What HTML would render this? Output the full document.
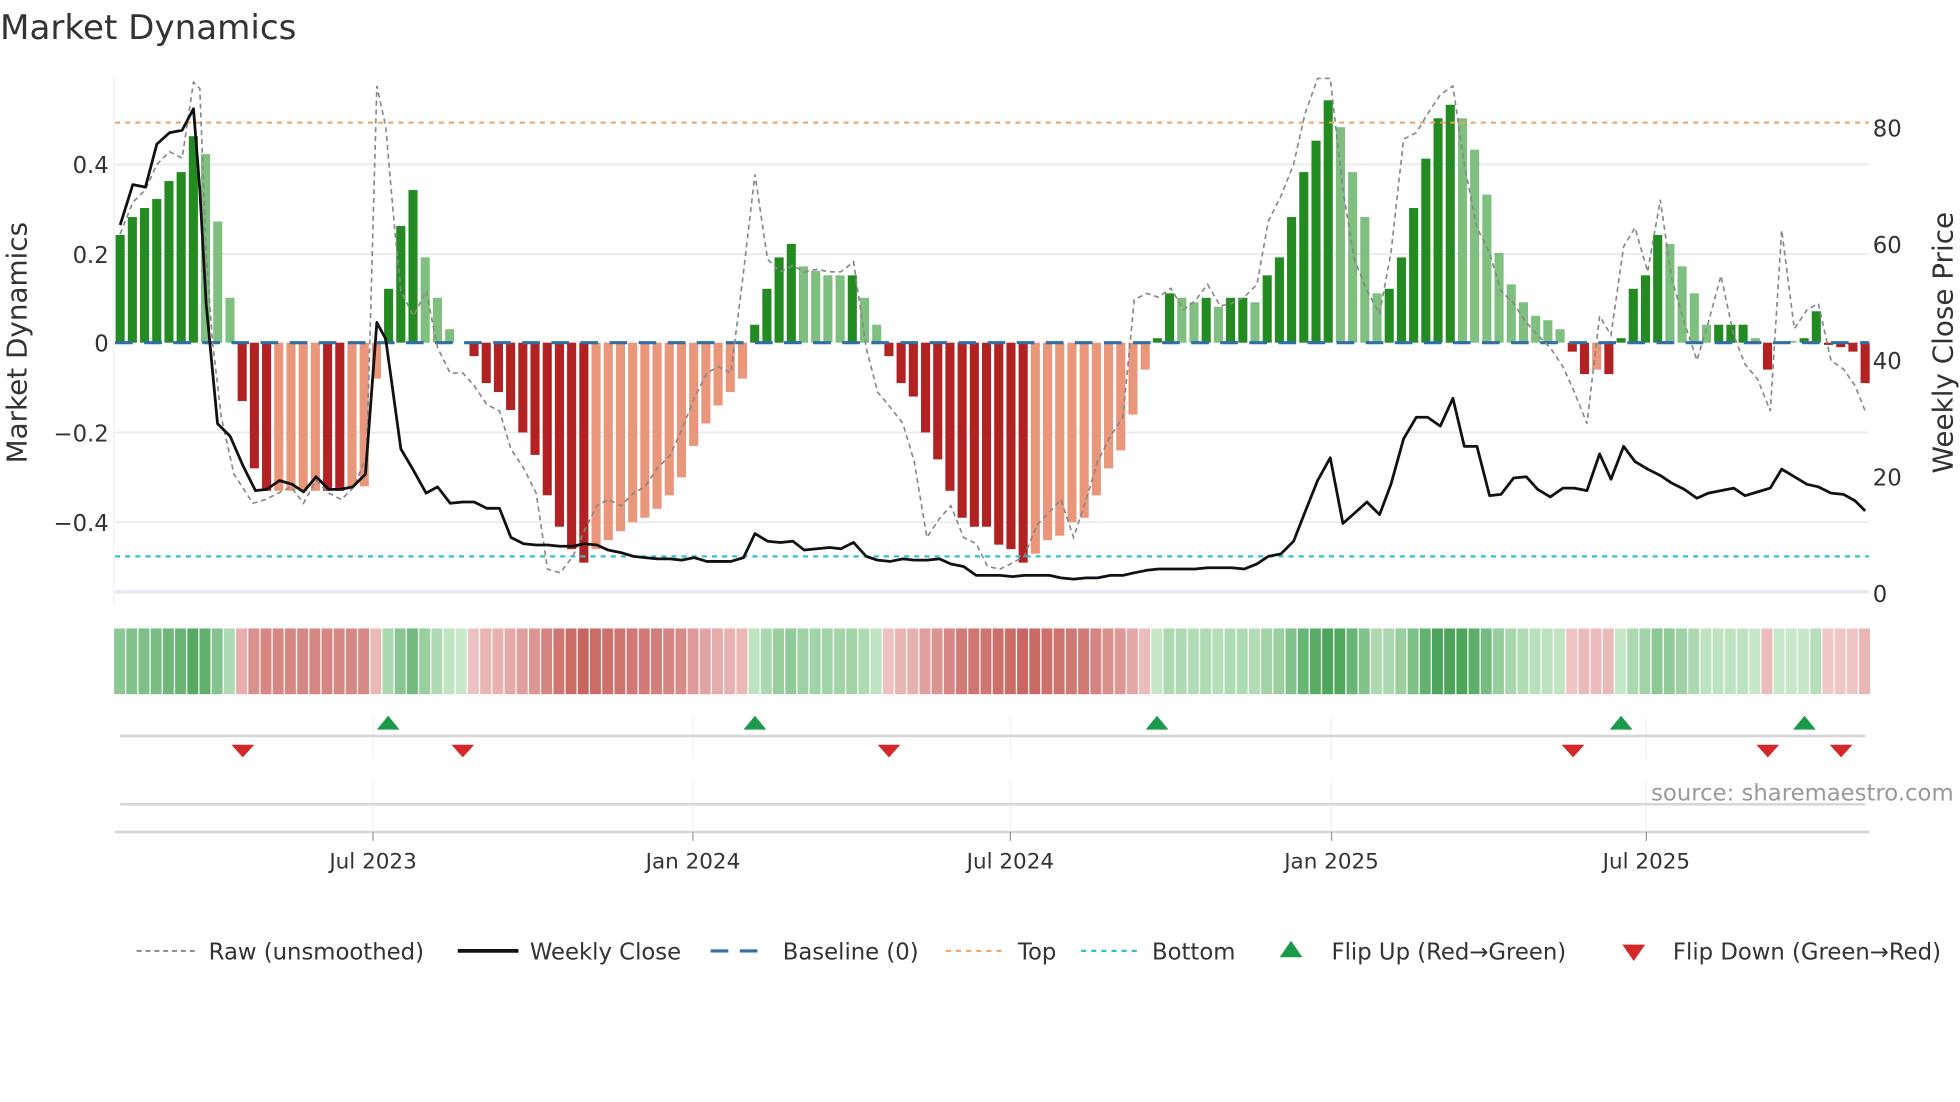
<!DOCTYPE html>
<html><head><meta charset="utf-8"><style>
html,body{margin:0;padding:0;background:#fff;width:1960px;height:1102px;overflow:hidden}
svg{display:block}
text{font-family:"DejaVu Sans","Liberation Sans",sans-serif;fill:#333}
</style></head><body>
<svg id="s" width="1960" height="1102" viewBox="0 0 1550 871.5" xmlns="http://www.w3.org/2000/svg">
<text x="0" y="31" font-size="27">Market Dynamics</text>
<g stroke="#e8ebf0" stroke-width="1.5">
<line x1="91" y1="130" x2="1478" y2="130"/><line x1="91" y1="201" x2="1478" y2="201"/>
<line x1="91" y1="342" x2="1478" y2="342"/><line x1="91" y1="413" x2="1478" y2="413"/>
</g>
<line x1="91" y1="468" x2="1478" y2="468" stroke="#e6eaf2" stroke-width="3"/>
<line x1="90" y1="62" x2="90" y2="478" stroke="#eceff3" stroke-width="1"/>
<g id="bars"></g>
<line x1="91" y1="271" x2="1478" y2="271" stroke="#2f6fa3" stroke-width="2.5" stroke-dasharray="14,9"/>
<line x1="91" y1="97" x2="1478" y2="97" stroke="#f0a060" stroke-width="1.6" stroke-dasharray="4,4"/>
<line x1="91" y1="440" x2="1478" y2="440" stroke="#30c0d0" stroke-width="1.8" stroke-dasharray="4,4"/>
<polyline id="raw" fill="none" stroke="#888" stroke-width="1.3" stroke-dasharray="4,3"/>
<polyline id="close" fill="none" stroke="#111" stroke-width="2.2" stroke-linejoin="round"/>
<g font-size="18" text-anchor="end">
<text x="86" y="137">0.4</text><text x="86" y="208">0.2</text><text x="86" y="278">0</text>
<text x="86" y="349">−0.2</text><text x="86" y="420">−0.4</text></g>
<g font-size="18">
<text x="1481" y="108">80</text><text x="1481" y="200">60</text><text x="1481" y="292">40</text>
<text x="1481" y="384">20</text><text x="1481" y="476">0</text></g>
<text transform="translate(21,271) rotate(-90)" font-size="22" text-anchor="middle">Market Dynamics</text>
<text transform="translate(1544,271) rotate(-90)" font-size="22" text-anchor="middle">Weekly Close Price</text>
<g id="heat"></g>
<g stroke="#eef1f5" stroke-width="1">
<line x1="295" y1="567" x2="295" y2="600"/><line x1="548" y1="567" x2="548" y2="600"/><line x1="799" y1="567" x2="799" y2="600"/><line x1="1053" y1="567" x2="1053" y2="600"/><line x1="1302" y1="567" x2="1302" y2="600"/>
<line x1="295" y1="617" x2="295" y2="658"/><line x1="548" y1="617" x2="548" y2="658"/><line x1="799" y1="617" x2="799" y2="658"/><line x1="1053" y1="617" x2="1053" y2="658"/><line x1="1302" y1="617" x2="1302" y2="658"/>
</g>
<line x1="95" y1="582" x2="1475" y2="582" stroke="#d4d6d8" stroke-width="2"/>
<line x1="95" y1="636" x2="1475" y2="636" stroke="#d4d6d8" stroke-width="2"/>
<line x1="91" y1="658" x2="1478" y2="658" stroke="#d4d6d8" stroke-width="2"/>
<g id="flips"></g>
<g stroke="#999" stroke-width="1">
<line x1="295" y1="658" x2="295" y2="665"/><line x1="548" y1="658" x2="548" y2="665"/><line x1="799" y1="658" x2="799" y2="665"/><line x1="1053" y1="658" x2="1053" y2="665"/><line x1="1302" y1="658" x2="1302" y2="665"/></g>
<g font-size="17" text-anchor="middle">
<text x="295" y="687">Jul 2023</text><text x="548" y="687">Jan 2024</text><text x="799" y="687">Jul 2024</text><text x="1053" y="687">Jan 2025</text><text x="1302" y="687">Jul 2025</text></g>
<text x="1545" y="633" font-size="18" text-anchor="end" style="fill:#999">source: sharemaestro.com</text>
<g font-size="18">
<line x1="108" y1="752" x2="154" y2="752" stroke="#888" stroke-width="1.5" stroke-dasharray="4,3"/>
<text x="165" y="759">Raw (unsmoothed)</text>
<line x1="362" y1="752" x2="410" y2="752" stroke="#111" stroke-width="3"/>
<text x="419" y="759">Weekly Close</text>
<line x1="562" y1="752" x2="606" y2="752" stroke="#2f6fa3" stroke-width="2.5" stroke-dasharray="14,9"/>
<text x="619" y="759">Baseline (0)</text>
<line x1="748" y1="752" x2="793" y2="752" stroke="#f0a060" stroke-width="1.6" stroke-dasharray="4,4"/>
<text x="805" y="759">Top</text>
<line x1="855" y1="752" x2="899" y2="752" stroke="#30c0d0" stroke-width="1.8" stroke-dasharray="4,4"/>
<text x="911" y="759">Bottom</text>
<polygon points="1021,744 1030,757 1012,757" fill="#1a9a4a"/>
<text x="1053" y="759">Flip Up (Red→Green)</text>
<polygon points="1283,747 1301,747 1292,760" fill="#d62728"/>
<text x="1323" y="759">Flip Down (Green→Red)</text>
</g>
</svg>
<script>
var V=[[.24,1],[.28,1],[.30,1],[.32,1],[.36,1],[.38,1],[.46,1],[.42,0],[.27,0],[.10,0],
[-.13,1],[-.28,1],[-.33,1],[-.33,0],[-.33,0],[-.33,0],[-.33,0],[-.33,1],[-.33,1],[-.32,0],[-.32,0],[-.08,0],
[.12,1],[.26,1],[.34,1],[.19,0],[.10,0],[.03,0],[0,0],
[-.03,1],[-.09,1],[-.11,1],[-.15,1],[-.20,1],[-.25,1],[-.34,1],[-.41,1],[-.46,1],[-.49,1],[-.46,0],[-.44,0],[-.42,0],[-.40,0],[-.39,0],[-.37,0],[-.34,0],[-.30,0],[-.23,0],[-.18,0],[-.14,0],[-.11,0],[-.08,0],
[.04,1],[.12,1],[.19,1],[.22,1],[.17,0],[.16,0],[.15,0],[.15,0],[.15,1],[.10,0],[.04,0],
[-.03,1],[-.09,1],[-.12,1],[-.20,1],[-.26,1],[-.33,1],[-.39,1],[-.41,1],[-.41,1],[-.45,1],[-.46,1],[-.49,1],[-.47,0],[-.44,0],[-.43,0],[-.40,0],[-.39,0],[-.34,0],[-.28,0],[-.24,0],[-.16,0],[-.06,0],
[.01,1],[.11,1],[.10,0],[.09,0],[.10,1],[.08,0],[.10,1],[.10,1],[.09,0],[.15,1],[.19,1],[.28,1],[.38,1],[.45,1],[.54,1],[.48,0],[.38,0],[.28,0],[.11,0],[.12,1],[.19,1],[.30,1],[.41,1],[.50,1],[.53,1],[.50,0],[.43,0],[.33,0],[.20,0],[.13,0],[.09,0],[.06,0],[.05,0],[.03,0],
[-.02,1],[-.07,1],[-.06,0],[-.07,1],
[.01,1],[.12,1],[.15,1],[.24,1],[.22,0],[.17,0],[.11,0],[.04,0],[.04,1],[.04,1],[.04,1],[.01,0],
[-.06,1],[0,0],[.004,0],[.01,1],[.07,1],[-.005,1],[-.01,1],[-.02,1],[-.09,1]];
var NS="http://www.w3.org/2000/svg",b=document.getElementById('bars'),h=document.getElementById('heat');
var n=V.length,step=(1475-95)/(n-1);
function el(t,a,p){var e=document.createElementNS(NS,t);for(var k in a)e.setAttribute(k,a[k]);p.appendChild(e);return e;}
function mix(a,c,t){return 'rgb('+[0,1,2].map(function(i){return Math.round(a[i]+(c[i]-a[i])*t)}).join(',')+')';}
for(var i=0;i<n;i++){var v=V[i][0],d=V[i][1],x=95+i*step,y=271-v*355;
var c=v>=0?(d?'#238b22':'#7fbf7f'):(d?'#b22222':'#e9967a');
if(Math.abs(v)>0.001)el('rect',{x:x-3.6,y:Math.min(y,271),width:7.2,height:Math.abs(v*355),fill:c},b);
var t=Math.min(1,Math.abs(v)/0.5);
var hc=v>=0?mix([200,232,202],[76,165,90],t):mix([240,200,200],[200,100,95],t);
el('rect',{x:x-4.8,y:497,width:step-1,height:52,fill:hc},h);}
var raw="95,185 105,160 115,150 124,130 134,120 144,125 153,65 158,70 163,200 168,270 175,330 185,375 200,398 210,395 220,390 230,385 240,398 250,380 260,390 270,395 280,385 290,360 298,68 305,100 312,180 317,230 327,250 337,230 346,275 356,295 366,295 375,305 385,320 395,325 404,355 414,370 424,390 433,450 443,453 453,440 462,420 472,400 481,395 491,400 501,390 510,385 520,370 530,360 539,340 549,315 559,295 568,290 578,295 588,215 597,138 607,205 617,215 627,210 636,215 646,213 656,215 665,215 675,207 685,275 694,310 704,322 714,335 723,365 733,425 743,410 752,400 762,425 772,430 781,448 791,450 801,445 810,440 820,415 830,405 839,395 849,425 859,395 868,365 878,345 888,330 897,237 907,232 916,235 926,228 936,245 945,238 955,225 965,242 974,240 984,235 994,225 1003,175 1013,155 1023,130 1032,90 1042,62 1052,62 1062,150 1071,205 1081,230 1091,248 1100,200 1110,110 1120,105 1129,90 1139,75 1149,68 1158,130 1168,180 1178,200 1187,230 1197,240 1207,255 1216,265 1226,275 1236,290 1245,310 1255,335 1265,250 1274,265 1284,195 1293,180 1303,215 1313,158 1322,220 1332,255 1342,285 1351,255 1361,218 1371,265 1380,288 1390,300 1400,325 1409,182 1419,260 1429,245 1438,240 1448,285 1458,292 1467,305 1475,325";
document.getElementById('raw').setAttribute('points',raw);
var cl="95,178 105,146 115,148 124,114 134,105 144,103 153,86 158,150 163,240 172,335 182,345 192,368 202,388 211,387 221,380 231,383 240,389 250,377 260,387 269,387 279,385 289,375 298,255 305,268 317,355 327,372 337,390 346,385 356,398 366,397 375,397 385,402 395,402 404,425 414,430 424,431 433,431 443,432 453,432 462,430 472,431 481,435 491,437 501,440 510,441 520,442 530,442 539,443 549,441 559,444 568,444 578,444 588,441 597,422 607,428 617,429 627,428 636,435 646,434 656,433 665,434 675,429 685,440 694,443 704,444 714,442 723,443 733,443 743,442 752,446 762,448 772,455 781,455 791,455 801,456 810,455 820,455 830,455 839,457 849,458 859,457 868,457 878,455 888,455 897,453 907,451 916,450 926,450 936,450 945,450 955,449 965,449 974,449 984,450 994,446 1003,440 1013,438 1023,428 1032,405 1042,380 1052,362 1062,414 1071,406 1081,397 1091,407 1100,383 1110,347 1120,330 1129,330 1139,337 1149,315 1158,353 1168,353 1178,392 1187,391 1197,378 1207,377 1216,387 1226,393 1236,386 1245,386 1255,388 1265,359 1274,379 1284,353 1293,365 1303,371 1313,376 1322,382 1332,387 1342,394 1351,390 1361,388 1371,386 1380,392 1390,389 1400,386 1409,371 1419,377 1429,383 1438,385 1448,390 1458,391 1467,396 1475,404";
document.getElementById('close').setAttribute('points',cl);
var f=document.getElementById('flips');
[307,597,915,1282,1427].forEach(function(x){el('polygon',{points:(x)+',566 '+(x+9)+',577 '+(x-9)+',577',fill:'#1a9a4a'},f);});
[192,366,703,1244,1398,1456].forEach(function(x){el('polygon',{points:(x-9)+',589 '+(x+9)+',589 '+x+',599',fill:'#d62728'},f);});
</script>
</body></html>
